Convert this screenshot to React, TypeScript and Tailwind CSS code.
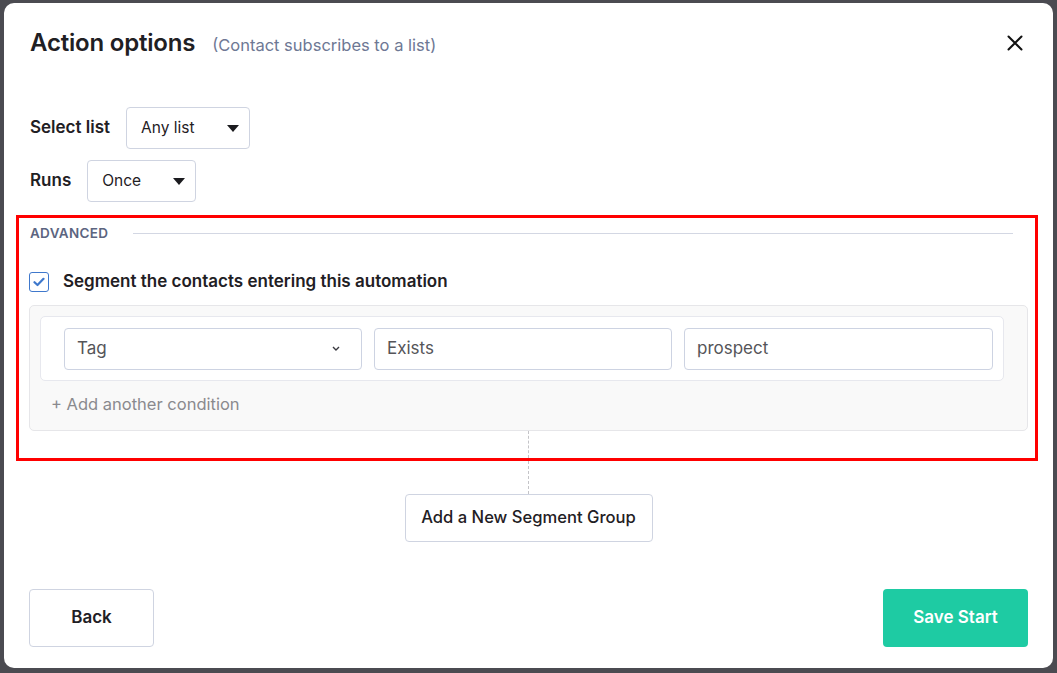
import React from 'react';

function Caret() {
  return (
    <svg width="12" height="7" viewBox="0 0 12 7" className="shrink-0">
      <path d="M0 0 H12 L6 7 Z" fill="#1b1b1f" />
    </svg>
  );
}

function SelectBox({ value, width }: { value: string; width: string }) {
  return (
    <div
      className={`flex h-[42px] items-center justify-between rounded-[4px] border border-[#cfd4e1] bg-white pl-[14px] pr-[10px] text-[15.5px] text-[#1f2024] ${width}`}
    >
      <span>{value}</span>
      <Caret />
    </div>
  );
}

function Field({ value, width, chevron }: { value: string; width: string; chevron?: boolean }) {
  return (
    <div
      className={`flex h-[42px] items-center justify-between rounded-[4px] border border-[#cdd3e2] bg-white pl-[12px] pr-[21px] text-[17px] text-[#555559] ${width}`}
    >
      <span>{value}</span>
      {chevron && (
        <svg width="8" height="5" viewBox="0 0 8 5">
          <path d="M1 1 L4 4 L7 1" fill="none" stroke="#3a3a40" strokeWidth="1.4" />
        </svg>
      )}
    </div>
  );
}

export default function App() {
  return (
    <div
      className="h-[673px] w-[1057px] bg-[#4b4b51] pb-[5px] pl-[4px] pr-[4px] pt-[3px]"
      style={{ fontFamily: 'Inter, "Noto Sans", sans-serif' }}
    >
      <div className="flex h-full flex-col rounded-[10px] bg-white">
        {/* header */}
        <div className="flex items-center justify-between pl-[26px] pr-[29px] pt-[24px]">
          <div className="flex items-baseline gap-[17px]">
            <h1 className="text-[24px] font-semibold leading-[32px] tracking-[-0.2px] text-[#1f2024]">Action options</h1>
            <span className="text-[16.5px] text-[#6e7894]">(Contact subscribes to a list)</span>
          </div>
          <button className="flex h-[18px] w-[18px] items-center justify-center">
            <svg width="16" height="16" viewBox="0 0 16 16">
              <path d="M1.5 1.5 L14.5 14.5 M14.5 1.5 L1.5 14.5" stroke="#111" strokeWidth="2" strokeLinecap="round" />
            </svg>
          </button>
        </div>

        {/* selects */}
        <div className="mt-[48px] flex flex-col gap-[11px] pl-[26px]">
          <div className="flex items-center gap-[16px]">
            <span className="text-[17px] font-semibold text-[#1f2024]">Select list</span>
            <SelectBox value="Any list" width="w-[124px]" />
          </div>
          <div className="flex items-center gap-[16px]">
            <span className="text-[17px] font-semibold text-[#1f2024]">Runs</span>
            <SelectBox value="Once" width="w-[109px]" />
          </div>
        </div>

        {/* advanced (highlighted) */}
        <div className="ml-[12px] mt-[13px] w-[1022px] border-[3px] border-[#ff0000]">
          <div className="flex items-center pl-[11px] pr-[22px] pt-[7px]">
            <span className="text-[13.5px] font-semibold leading-[16px] tracking-[0.3px] text-[#5c6580]">ADVANCED</span>
            <div className="ml-[25px] h-px flex-1 bg-[#d3d7e3]" />
          </div>

          <div className="mt-[28px] flex items-center gap-[14px] pl-[10px]">
            <div className="flex h-[20px] w-[20px] items-center justify-center rounded-[3px] border-[1.5px] border-[#3f78cc] bg-white">
              <svg width="12" height="10" viewBox="0 0 12 10">
                <path d="M1.5 5.2 L4.5 8 L10.5 1.8" fill="none" stroke="#3f78cc" strokeWidth="2.2" strokeLinecap="round" strokeLinejoin="round" />
              </svg>
            </div>
            <span className="text-[17px] font-semibold text-[#1f2024]">Segment the contacts entering this automation</span>
          </div>

          <div className="ml-[10px] mt-[10px] w-[999px] rounded-[5px] border border-[#e6e6e9] bg-[#f9f9f9] pb-[14px] pt-[10px]">
            <div className="ml-[10px] flex w-[964px] items-center gap-[12px] rounded-[5px] border border-[#e7e8ee] bg-white pb-[10px] pl-[23px] pr-[10px] pt-[11px]">
              <Field value="Tag" width="w-[298px]" chevron />
              <Field value="Exists" width="w-[298px]" />
              <Field value="prospect" width="flex-1" />
            </div>
            <div className="mt-[11px] pl-[21px] text-[16.5px] leading-[24px] text-[#8a8a8e]">+ Add another condition</div>
          </div>

          <div className="ml-[509px] h-[27px] w-0 border-l border-dashed border-[#c4c4c8]" />
        </div>

        {/* segment group */}
        <div className="flex flex-col items-center">
          <div className="h-[33px] w-0 border-l border-dashed border-[#c4c4c8]" />
          <button className="h-[48px] w-[248px] rounded-[4px] border border-[#cfd4e1] bg-white text-[16.6px] font-medium text-[#1f2024]">
            Add a New Segment Group
          </button>
        </div>

        {/* footer */}
        <div className="mt-auto flex items-center justify-between pb-[21px] pl-[25px] pr-[25px]">
          <button className="h-[58px] w-[125px] rounded-[4px] border border-[#cfd4e1] bg-white text-[17px] font-semibold text-[#1f2024]">
            Back
          </button>
          <button className="h-[58px] w-[145px] rounded-[4px] bg-[#1ecba3] text-[17px] font-semibold text-white">
            Save Start
          </button>
        </div>
      </div>
    </div>
  );
}
